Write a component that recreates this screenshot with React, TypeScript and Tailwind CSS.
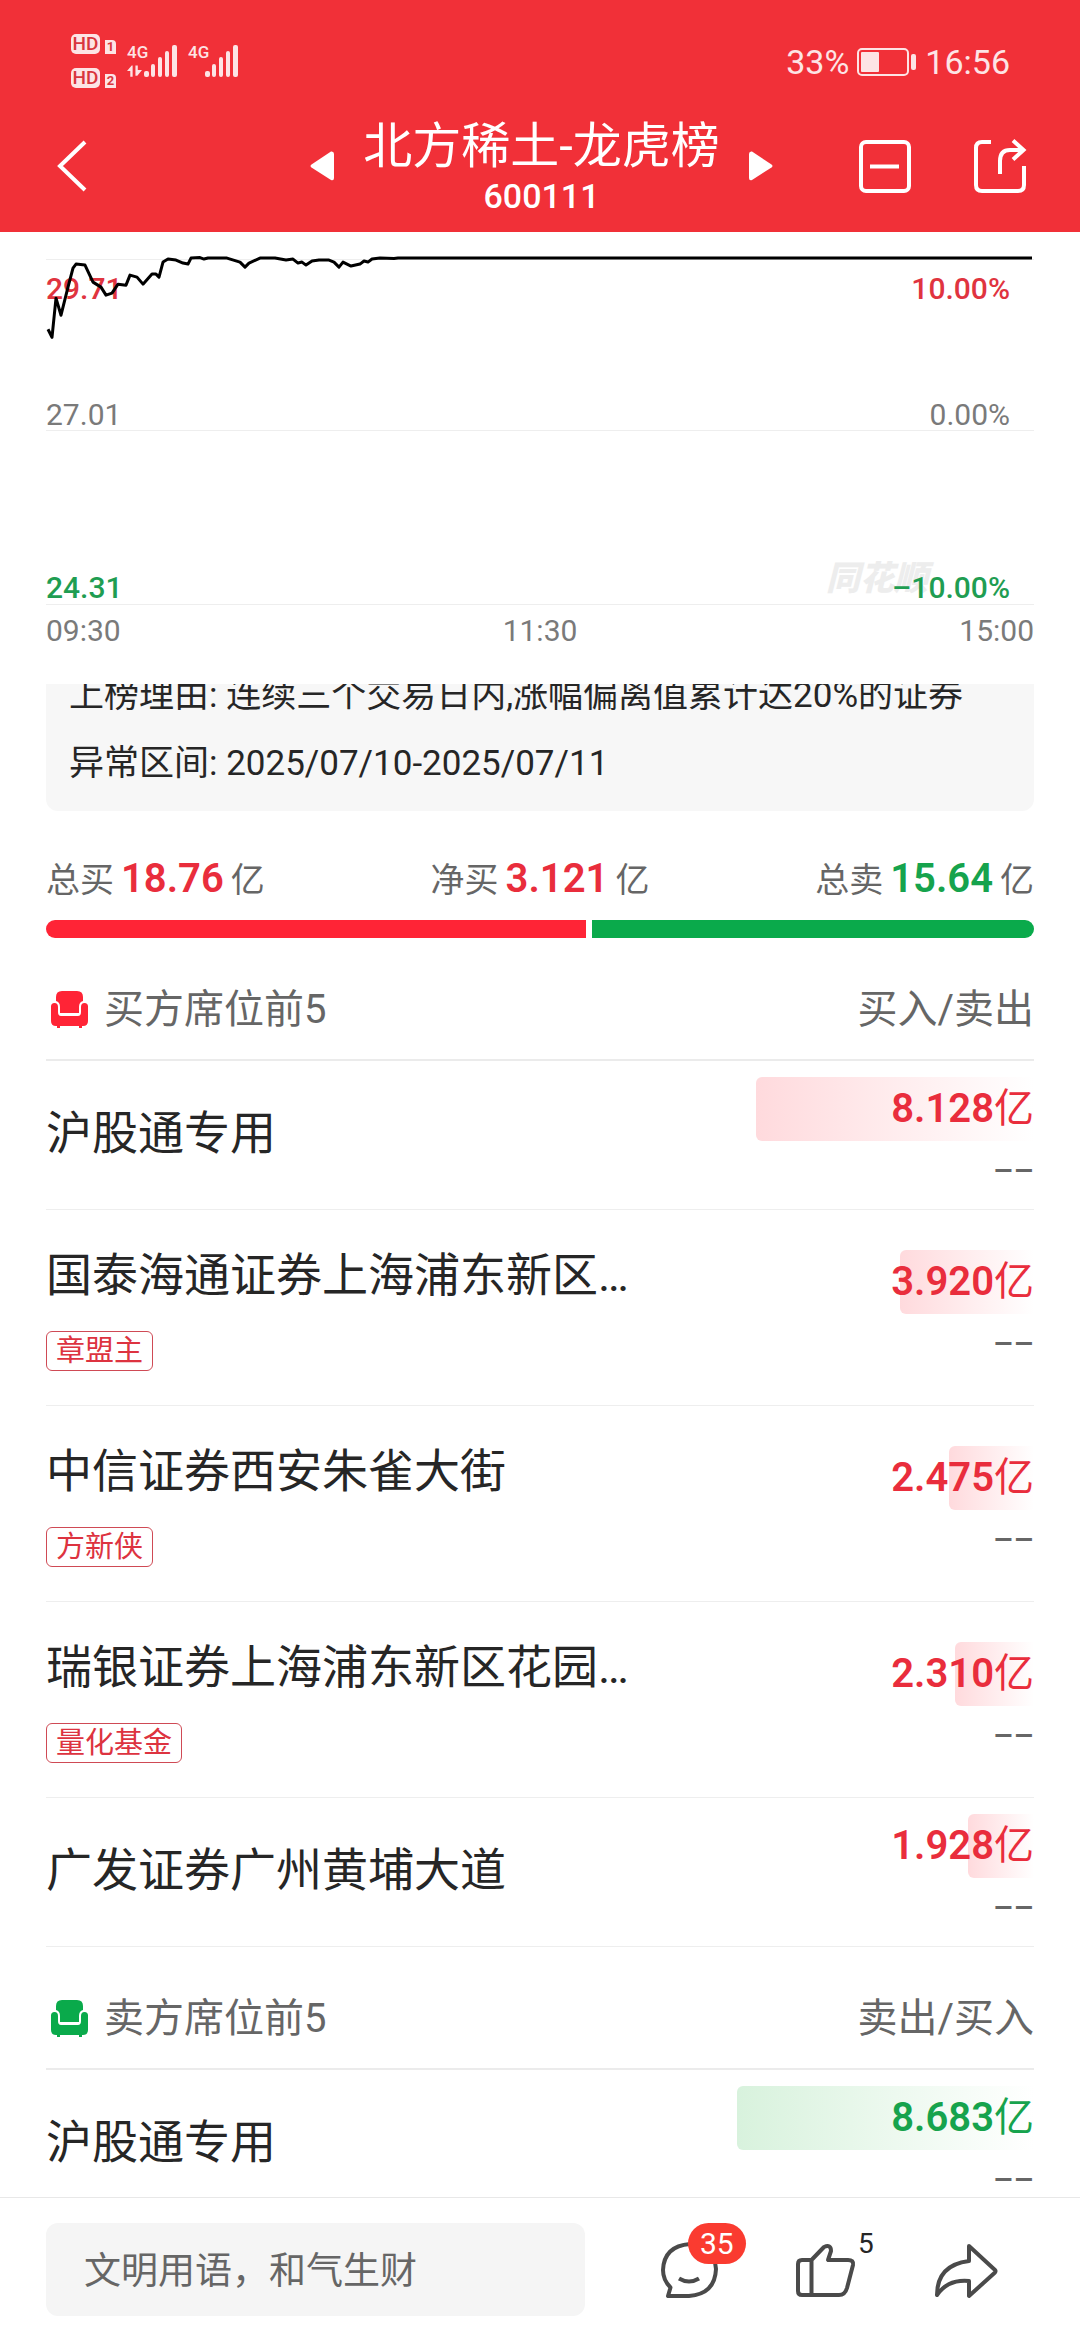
import React from "react";

type Side = "buy" | "sell";
type Seat = { name: string; tag?: string; amount: string };

const buySeats: Seat[] = [
  { name: "沪股通专用", amount: "8.128" },
  { name: "国泰海通证券上海浦东新区…", tag: "章盟主", amount: "3.920" },
  { name: "中信证券西安朱雀大街", tag: "方新侠", amount: "2.475" },
  { name: "瑞银证券上海浦东新区花园…", tag: "量化基金", amount: "2.310" },
  { name: "广发证券广州黄埔大道", amount: "1.928" },
];
const sellSeats: Seat[] = [{ name: "沪股通专用", amount: "8.683" }];

const pricePoints =
  "2,97 6,105 10,66 15,83 22,55 27,36 30,32 39,33 47,50 55,55 60,63 66,61 72,52 80,53 84,43 91,45 97,52 106,42 110,42 113,45 117,30 122,27 130,28 137,31 142,32 145,26 154,25.5 158,27 162,26 181,26 194,30 199,35 203,31 214,26 229,26 240,28 247,27 252,31 256,30 260,33 266,29 273,28 283,28 288,30 293,35 297,30 305,34 314,32 318,29 322,30 326,27 334,26 348,26.5 352,26 986,26";

function HdBadge({ sim }: { sim: string }) {
  return (
    <div className="flex items-end gap-[5px]">
      <span className="flex h-5 w-[29px] items-center justify-center rounded-[5px] bg-[#fde4e5] text-[19px] leading-5 font-medium text-[#d9363d]">
        HD
      </span>
      <span className="flex h-[14px] w-[11px] items-center justify-center rounded-tr-[4px] bg-[#fde4e5] text-[13px] leading-[14px] font-bold text-[#d9363d]">
        {sim}
      </span>
    </div>
  );
}

function Signal({ data }: { data?: boolean }) {
  return (
    <div className="flex h-8 items-end">
      <div className="flex h-full w-[17px] flex-col justify-between">
        <span className="text-[17px] leading-[15px] font-medium">4G</span>
        {data && (
          <svg viewBox="0 0 16 12" className="h-3 w-[15px]" fill="currentColor">
            <path d="M0 6 5 0h1v12H3.500V6zM9 0h2.500v5H16l-5 6H9z" />
          </svg>
        )}
      </div>
      <svg viewBox="0 0 34 32" className="h-8 w-[34px]" fill="currentColor">
        <rect x="0" y="26" width="5" height="6" rx="2" />
        <rect x="7" y="19" width="4" height="13" rx="2" />
        <rect x="14" y="12" width="4" height="20" rx="2" />
        <rect x="21" y="6" width="4" height="26" rx="2" />
        <rect x="28" y="0" width="5" height="32" rx="2" />
      </svg>
    </div>
  );
}

function StatusBar() {
  return (
    <div className="flex h-[122px] items-start justify-between pr-[70px] pl-[71px] text-[#fde4e5]">
      <div className="flex items-start">
        <div className="flex flex-col gap-[14px] pt-[34px]">
          <HdBadge sim="1" />
          <HdBadge sim="2" />
        </div>
        <div className="flex gap-[10px] pt-[45px] pl-[11px]">
          <Signal data />
          <Signal />
        </div>
      </div>
      <div className="flex items-center gap-2 pt-[42px] text-[34px] leading-10">
        <span>33%</span>
        <svg viewBox="0 0 60 28" className="h-7 w-[60px]" fill="none">
          <rect x="1" y="1" width="50" height="26" rx="4" stroke="currentColor" strokeWidth="2" />
          <rect x="4" y="4" width="18" height="20" rx="1" fill="currentColor" />
          <rect x="54" y="6" width="5" height="16" rx="2" fill="currentColor" />
        </svg>
        <span>16:56</span>
      </div>
    </div>
  );
}

function NavBar() {
  return (
    <div className="flex h-[110px] items-start justify-between pr-[53px] pl-[57px] text-white">
      <button aria-label="返回" className="mt-[18px] w-[168px]">
        <svg viewBox="0 0 30 52" className="h-[52px] w-[30px]" fill="none" stroke="currentColor" strokeWidth="4">
          <path d="M28 2 3 26l25 24" />
        </svg>
      </button>
      <div className="flex items-start gap-[29px]">
        <button aria-label="上一只" className="mt-[29px]">
          <svg viewBox="0 0 24 30" className="h-[30px] w-6" fill="currentColor">
            <path d="M21 .500Q24 0 24 3v24q0 3-3 2L1.500 16.500q-2-1.500 0-3z" />
          </svg>
        </button>
        <div className="flex flex-col items-center">
          <h1 className="text-[49px] leading-[50px]">北方稀土-龙虎榜</h1>
          <span className="text-[34px] leading-[48px] font-medium">600111</span>
        </div>
        <button aria-label="下一只" className="mt-[29px]">
          <svg viewBox="0 0 24 30" className="h-[30px] w-6" fill="currentColor">
            <path d="M3 .500Q0 0 0 3v24q0 3 3 2l19.500-12.500q2-1.500 0-3z" />
          </svg>
        </button>
      </div>
      <div className="mt-[17px] flex gap-[61px]">
        <button aria-label="移出自选">
          <svg viewBox="0 0 54 54" className="size-[54px]" fill="none" stroke="currentColor" strokeWidth="4">
            <rect x="3" y="3" width="48" height="49" rx="5" />
            <path d="M12 27.500h29" />
          </svg>
        </button>
        <button aria-label="分享">
          <svg viewBox="0 0 54 54" className="size-[54px]" fill="none" stroke="currentColor" strokeWidth="4">
            <path d="M18 3H9Q3 3 3 9v37q0 6 6 6h36q6 0 6-6V27" />
            <path d="M27 35V22q0-11 10-11h13M40 1.500 50.500 11 40 20.500" />
          </svg>
        </button>
      </div>
    </div>
  );
}

function PriceChart() {
  return (
    <section className="px-[46px] text-[30px] leading-[30px] text-[#7a7a7a]">
      <div className="relative pt-[27px]">
        <svg
          viewBox="0 0 988 372"
          preserveAspectRatio="none"
          className="absolute inset-0 z-10 h-full w-full"
          fill="none"
          stroke="#000"
          strokeWidth="3"
          strokeLinejoin="round"
        >
          <polyline points={pricePoints} />
        </svg>
        <div className="flex h-[171px] flex-col justify-between border-t border-[#eeeeee] pt-[14px] pr-[24px]">
          <div className="flex justify-between font-medium text-[#e0343f]">
            <span>29.71</span>
            <span>10.00%</span>
          </div>
          <div className="flex justify-between">
            <span>27.01</span>
            <span>0.00%</span>
          </div>
        </div>
        <div className="flex h-[175px] flex-col justify-end border-y border-[#eeeeee] pr-[24px] pb-px">
          <div className="flex items-end justify-between font-medium text-[#1f9d52]">
            <span>24.31</span>
            <div className="relative">
              <span className="absolute right-[82px] bottom-[8px] text-[34px] leading-[34px] font-black whitespace-nowrap text-[#ededed] italic">
                同花顺
              </span>
              <span className="relative">–10.00%</span>
            </div>
          </div>
        </div>
      </div>
      <div className="flex justify-between pt-[11px] pb-[38px]">
        <span>09:30</span>
        <span>11:30</span>
        <span>15:00</span>
      </div>
    </section>
  );
}

function Reason() {
  return (
    <section className="mx-[46px] h-[127px] overflow-hidden rounded-b-[12px] bg-[#f7f7f7] px-[23px] text-[35px] text-[#262626]">
      <div className="-mt-[22px] leading-[68px] whitespace-nowrap">
        <p>上榜理由: 连续三个交易日内,涨幅偏离值累计达20%的证券</p>
        <p>异常区间: 2025/07/10-2025/07/11</p>
      </div>
    </section>
  );
}

function Total({ label, value, green }: { label: string; value: string; green?: boolean }) {
  return (
    <div className="flex items-baseline gap-[7px]">
      <span>{label}</span>
      <span className={green ? "text-[40px] font-semibold text-[#16a34d]" : "text-[40px] font-semibold text-[#e92d3c]"}>
        {value}
      </span>
      <span>亿</span>
    </div>
  );
}

function Summary() {
  return (
    <section className="px-[46px] pt-[42px]">
      <div className="flex justify-between text-[34px] leading-[52px] text-[#666666]">
        <Total label="总买" value="18.76" />
        <Total label="净买" value="3.121" />
        <Total label="总卖" value="15.64" green />
      </div>
      <div className="mt-[14px] flex h-[18px] gap-[6px]">
        <div className="grow-[55] rounded-l-[9px] bg-[#ff2436]" />
        <div className="grow-[45] rounded-r-[9px] bg-[#0aaa4b]" />
      </div>
    </section>
  );
}

function SeatHeader({ side }: { side: Side }) {
  const buy = side === "buy";
  return (
    <div className="flex h-[123px] items-center justify-between border-b-2 border-[#ebebeb] pt-[22px] text-[40px] leading-[48px] text-[#666666]">
      <div className="flex items-center gap-4 pl-[5px]">
        <svg viewBox="0 0 37 38" className={buy ? "h-[38px] w-[37px] text-[#ff2436]" : "h-[38px] w-[37px] text-[#0aaa4b]"} fill="currentColor">
          <path d="M5 10V6q0-6 6-6h15q6 0 6 6v4q-4 1-4 6v6H9v-6q0-5-4-6z" />
          <path d="M0 15.500Q0 12 3.500 12T7 16v5q0 4 3 4h17q3 0 3-4v-5q0-4 3.500-4t3.500 3.500V30q0 5-5 5h-1v2h-3v-2H9v2H6v-2H5q-5 0-5-5z" />
        </svg>
        <h2>{buy ? "买方席位前5" : "卖方席位前5"}</h2>
      </div>
      <span>{buy ? "买入/卖出" : "卖出/买入"}</span>
    </div>
  );
}

function SeatRow({ seat, side }: { seat: Seat; side: Side }) {
  const buy = side === "buy";
  return (
    <li className="flex items-center justify-between border-b border-[#eeeeee] py-4">
      <div className={seat.tag ? "flex flex-col items-start gap-[26px]" : "flex flex-col items-start pb-1"}>
        <span className="text-[46px] leading-[60px] text-[#262626]">{seat.name}</span>
        {seat.tag && (
          <span className="rounded-[6px] border border-[#cf4a55] px-[9px] text-[29px] leading-[38px] text-[#dd3340]">
            {seat.tag}
          </span>
        )}
      </div>
      <div className={seat.tag ? "flex w-[35%] flex-col items-end pt-6 pb-[23px]" : "flex w-[35%] flex-col items-end"}>
        <div className="relative flex h-16 w-full items-center justify-end">
          <div
            className={
              buy
                ? "absolute inset-y-0 right-0 rounded-l-[6px] bg-linear-to-r from-[#ffdadd] to-white"
                : "absolute inset-y-0 right-0 rounded-l-[6px] bg-linear-to-r from-[#d8f2dd] to-white"
            }
            style={{ width: `${parseFloat(seat.amount) * 9.9}%` }}
          />
          <span className={buy ? "relative text-[40px] leading-[48px] text-[#e92d3c]" : "relative text-[40px] leading-[48px] text-[#16a34d]"}>
            <span className="font-semibold">{seat.amount}</span>亿
          </span>
        </div>
        <span className="mt-2 text-[32px] leading-[44px] font-medium text-[#666666]">––</span>
      </div>
    </li>
  );
}

function Seats({ side, seats }: { side: Side; seats: Seat[] }) {
  return (
    <section className="px-[46px]">
      <SeatHeader side={side} />
      <ul>
        {seats.map((s) => (
          <SeatRow key={s.name} seat={s} side={side} />
        ))}
      </ul>
    </section>
  );
}

function BottomBar() {
  return (
    <footer className="fixed inset-x-0 bottom-0 flex h-[143px] items-start border-t border-[#e8e8e8] bg-white pt-[25px] pl-[46px] text-[#4a4a4a]">
      <input
        type="text"
        aria-label="发表评论"
        placeholder="文明用语，和气生财"
        className="h-[93px] w-[54.5%] max-w-[539px] min-w-0 rounded-[12px] bg-[#f5f5f5] px-[38px] pt-1 text-[37px] text-[#262626] placeholder:text-[#666666]"
      />
      <div className="flex grow justify-between pt-[19px] pr-[82px] pl-[76px]">
        <button aria-label="评论" className="relative">
          <svg viewBox="0 0 57 57" className="size-[57px]" fill="none" stroke="currentColor" strokeWidth="4" strokeLinejoin="round">
            <path d="M7 54h21q26-2 27-27Q53 3 29 2 3 4 2 28q0 10 7.500 17.500z" />
            <path d="M18 36.500q10 6 20 0" />
          </svg>
          <span className="absolute -top-[19px] left-[27px] rounded-full bg-[#fa3b30] px-3 text-[30px] leading-[41px] text-white">35</span>
        </button>
        <button aria-label="点赞" className="relative">
          <svg viewBox="0 0 60 56" className="h-14 w-[60px]" fill="none" stroke="currentColor" strokeWidth="4" strokeLinejoin="round">
            <path d="M15.500 17 28 4q7-3 7 4l-3 9h20q6 0 5 5l-6 23q-2 7-8 7H6q-4 0-4-4V21q0-4 4-4zM15.500 17v35" />
          </svg>
          <span className="absolute -top-[14px] left-[62px] text-[28px] leading-8 text-[#262626]">5</span>
        </button>
        <button aria-label="转发">
          <svg viewBox="0 0 64 56" className="h-14 w-16" fill="none" stroke="currentColor" strokeWidth="4" strokeLinejoin="round">
            <path d="M35 3 61 27q1 1 0 2.500L35 53V38Q14 36 3 52 3 22 35 18z" />
          </svg>
        </button>
      </div>
    </footer>
  );
}

export default function App() {
  return (
    <div className="h-screen overflow-hidden bg-white font-[Roboto,'Noto_Sans_CJK_SC',sans-serif]">
      <header className="bg-[#f13038]">
        <StatusBar />
        <NavBar />
      </header>
      <main>
        <PriceChart />
        <Reason />
        <Summary />
        <Seats side="buy" seats={buySeats} />
        <Seats side="sell" seats={sellSeats} />
      </main>
      <BottomBar />
    </div>
  );
}
